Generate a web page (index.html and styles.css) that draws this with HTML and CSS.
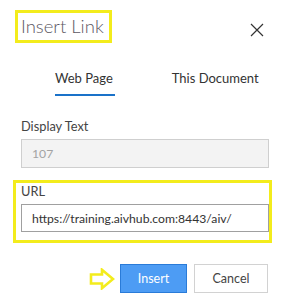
FILE: index.html
```html
<!DOCTYPE html>
<html lang="en">
<head>
    <meta charset="UTF-8">
    <meta name="viewport" content="width=device-width, initial-scale=1.0">
    <title>Insert Link</title>
    <link rel="stylesheet" href="styles.css">
</head>
<body>
    <div class="dialog">
        <div class="dialog-header">
            <h1 class="dialog-title highlight">Insert Link</h1>
            <button class="close-btn" type="button" aria-label="Close">
                <svg width="14" height="14" viewBox="0 0 14 14">
                    <path d="M1 1 L13 13 M13 1 L1 13" stroke="#333" stroke-width="1.2" fill="none"/>
                </svg>
            </button>
        </div>

        <div class="tabs">
            <div class="tab active">Web Page</div>
            <div class="tab">This Document</div>
        </div>

        <div class="form-group">
            <label class="field-label" for="display-text">Display Text</label>
            <input class="field-input disabled" type="text" id="display-text" value="107" disabled>
        </div>

        <div class="form-group highlight url-group">
            <label class="field-label" for="url">URL</label>
            <input class="field-input" type="text" id="url" value="https://training.aivhub.com:8443/aiv/">
        </div>

        <div class="actions">
            <svg class="pointer" width="26" height="22" viewBox="0 0 26 22">
                <path d="M2 6.5 H13 V1.8 L24 11 L13 20.2 V15.5 H2 Z" stroke="#f3ec1c" stroke-width="2.6" fill="none" stroke-linejoin="miter"/>
            </svg>
            <button class="btn btn-primary" type="button">Insert</button>
            <button class="btn" type="button">Cancel</button>
        </div>
    </div>
</body>
</html>
```

FILE: styles.css
```css
body {
    margin: 0;
    background: #fff;
    font-family: Lato, "Open Sans", sans-serif;
    color: #333;
}
.dialog {
    width: 248px;
    padding: 10px 12px 0 21px;
}
.dialog-header {
    display: flex;
    justify-content: space-between;
    align-items: center;
    height: 33px;
    margin-left: -6px;
}
.highlight {
    border: 3px solid #f3ec1c;
}
.dialog-title {
    margin: 0;
    height: 27px;
    padding: 0 5px 0 3px;
    font-size: 18.5px;
    font-weight: 300;
    line-height: 27px;
    color: #5c5762;
}
.close-btn {
    background: none;
    border: none;
    padding: 0;
    margin: 6px 5px 0 0;
    width: 14px;
    height: 14px;
    display: flex;
}
.tabs {
    display: flex;
    gap: 57px;
    margin: 17px 0 0 34px;
}
.tab {
    font-size: 13px;
    line-height: 20px;
    padding: 8px 0;
    white-space: nowrap;
    color: #333;
}
.tab.active {
    border-bottom: 2px solid #1a72c9;
    padding-bottom: 6px;
    padding-right: 2px;
}
.form-group {
    margin-top: 21px;
}
.field-label {
    display: block;
    font-size: 12.8px;
    line-height: 18px;
    margin-bottom: 4px;
    color: #444;
}
.field-input {
    display: block;
    width: 100%;
    height: 29px;
    box-sizing: border-box;
    padding: 0 10px;
    border: 1px solid #a0a0a0;
    font-family: inherit;
    font-size: 12.2px;
    color: #333;
    background: #fff;
}
.field-input.disabled {
    background: #f3f3f3;
    border-color: #cfcfcf;
    color: #a3a3a3;
}
.url-group {
    margin: 12px -3px 0 -8px;
    padding: 0 0 8px 5px;
}
.url-group .field-label {
    margin-top: -1px;
}
.url-group .field-input {
    height: 28px;
}
.actions {
    display: flex;
    justify-content: flex-end;
    align-items: center;
    gap: 7px;
    margin: 21px 1px 0 0;
}
.pointer {
    margin-right: -2px;
}
.btn {
    height: 29px;
    width: 74px;
    font-family: inherit;
    font-size: 12.5px;
    background: #fff;
    border: 1px solid #d2d2d2;
    color: #444;
}
.btn-primary {
    width: 67px;
    background: #4d9cf4;
    border-color: #2a7bd8;
    color: #fff;
}
```
